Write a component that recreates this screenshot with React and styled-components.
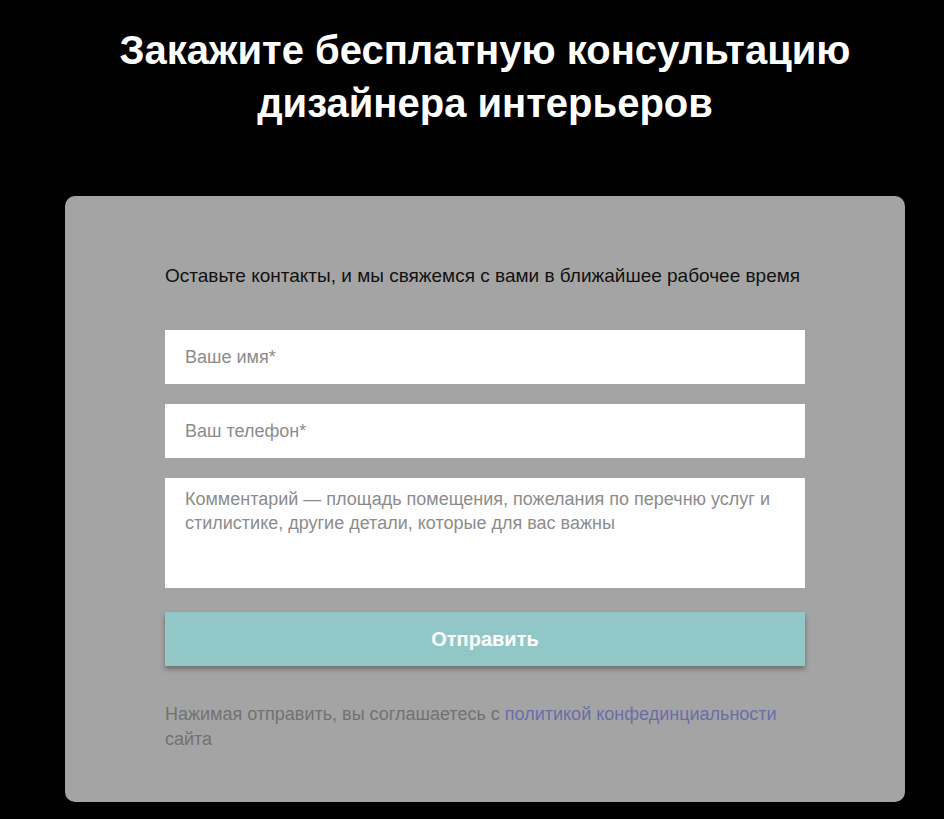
import React from "react";
import styled, { createGlobalStyle } from "styled-components";

const GlobalStyle = createGlobalStyle`
  html, body {
    margin: 0;
    padding: 0;
    background: #000;
  }
  body {
    font-family: "Liberation Sans", Arial, sans-serif;
  }
`;

const Page = styled.div`
  width: 944px;
  min-height: 819px;
  background: #000;
  display: flex;
  flex-direction: column;
  align-items: center;
  padding: 24px 0 0 26px;
  box-sizing: border-box;
`;

const Title = styled.h1`
  margin: 0;
  width: 800px;
  text-align: center;
  color: #fff;
  font-size: 40px;
  line-height: 53px;
  font-weight: 700;
`;

const Card = styled.div`
  margin-top: 66px;
  width: 840px;
  background: #a4a4a4;
  border-radius: 10px;
  padding: 66px 100px 50px;
  box-sizing: border-box;
  display: flex;
  flex-direction: column;
`;

const Lead = styled.p`
  margin: 0 0 40px;
  color: #111;
  font-size: 19px;
  line-height: 28px;
`;

const Form = styled.form`
  display: flex;
  flex-direction: column;
  gap: 20px;
`;

const Field = styled.input`
  height: 54px;
  border: none;
  outline: none;
  padding: 0 20px;
  font-family: inherit;
  font-size: 18px;
  color: #333;
  background: #fff;
  box-sizing: border-box;
  &::placeholder {
    color: #8c8c8c;
  }
`;

const Comment = styled.textarea`
  height: 110px;
  border: none;
  outline: none;
  resize: none;
  padding: 9px 20px;
  font-family: inherit;
  font-size: 18px;
  line-height: 24px;
  color: #333;
  background: #fff;
  box-sizing: border-box;
  &::placeholder {
    color: #8c8c8c;
  }
`;

const Submit = styled.button`
  margin-top: 4px;
  height: 54px;
  border: none;
  background: #92c7c8;
  color: #fff;
  font-family: inherit;
  font-size: 20px;
  font-weight: 700;
  box-shadow: 0 3px 5px rgba(0, 0, 0, 0.35);
  cursor: pointer;
`;

const Note = styled.p`
  margin: 36px 0 0;
  color: #727272;
  font-size: 18px;
  line-height: 25px;
`;

const PolicyLink = styled.a`
  color: #6a6ea8;
  text-decoration: none;
`;

export default function App() {
  return (
    <React.Fragment>
      <GlobalStyle />
      <Page>
        <Title>
          Закажите бесплатную консультацию
          <br />
          дизайнера интерьеров
        </Title>
        <Card>
          <Lead>Оставьте контакты, и мы свяжемся с вами в ближайшее рабочее время</Lead>
          <Form onSubmit={(e) => e.preventDefault()}>
            <Field type="text" placeholder="Ваше имя*" />
            <Field type="tel" placeholder="Ваш телефон*" />
            <Comment placeholder="Комментарий — площадь помещения, пожелания по перечню услуг и стилистике, другие детали, которые для вас важны" />
            <Submit type="submit">Отправить</Submit>
          </Form>
          <Note>
            Нажимая отправить, вы соглашаетесь с{" "}
            <PolicyLink href="#">политикой конфединциальности</PolicyLink> сайта
          </Note>
        </Card>
      </Page>
    </React.Fragment>
  );
}
